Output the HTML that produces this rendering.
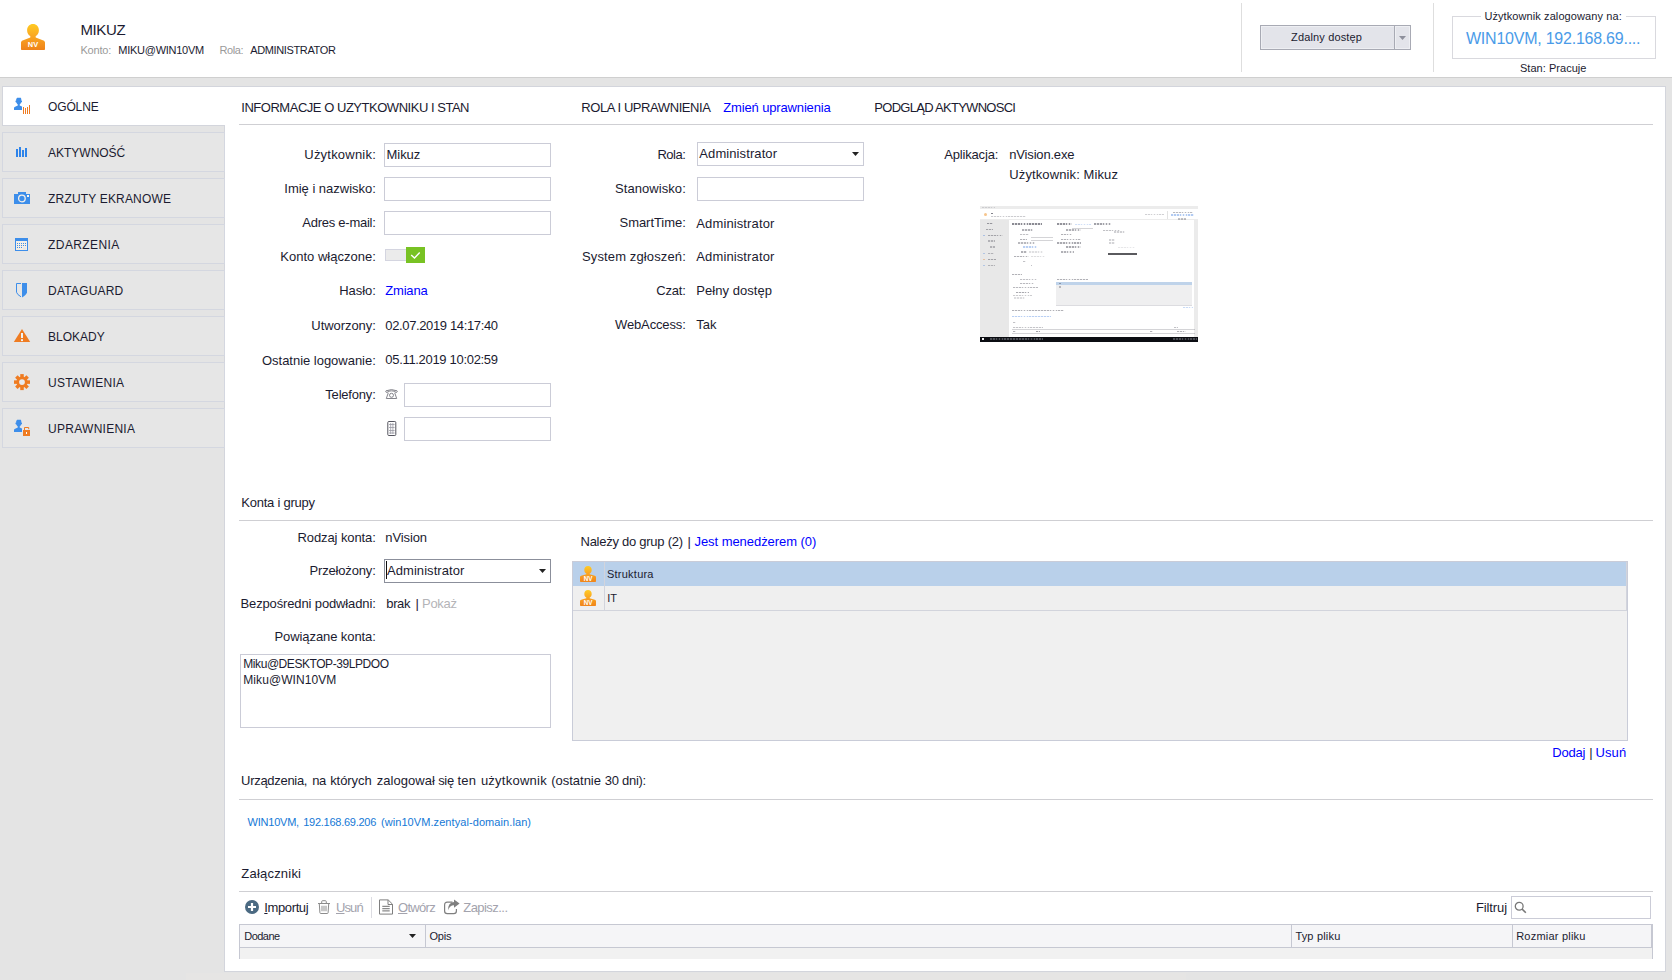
<!DOCTYPE html>
<html lang="pl"><head><meta charset="utf-8"><title>MIKUZ</title>
<style>
html,body{margin:0;padding:0;}
body{width:1672px;height:980px;overflow:hidden;background:#e4e4e4;position:relative;font-family:"Liberation Sans",sans-serif;}
.t{position:absolute;white-space:nowrap;}
.in{box-sizing:border-box;background:#fff;border:1px solid #cbccd7;}
.hl{position:absolute;height:1px;background:#cfcfd3;}
svg{position:absolute;overflow:visible;}
u{text-decoration:underline;}
</style></head><body>
<div style="position:absolute;left:0px;top:0px;width:1672px;height:77px;background:#fff;border-bottom:1px solid #cfcfcf;"></div>
<div style="position:absolute;left:1241px;top:3px;width:1px;height:69px;background:#dedede;"></div>
<div style="position:absolute;left:1433px;top:3px;width:1px;height:69px;background:#dedede;"></div>
<div style="position:absolute;left:224px;top:86px;width:1442px;height:886px;background:#fff;box-sizing:border-box;border:1px solid #d3d5dc;"></div>
<div style="position:absolute;left:2px;top:86px;width:223px;height:40px;background:#fff;box-sizing:border-box;border:1px solid #d3d5dc;border-right:none;"></div>
<span class="t" style="left:48.10px;top:100px;font-size:12px;line-height:14px;color:#1b1b30;letter-spacing:-0.158px;">OGÓLNE</span>
<div style="position:absolute;left:2px;top:132px;width:223px;height:40px;box-sizing:border-box;border:1px solid #d4d7e0;background:#e6e6e6;"></div>
<span class="t" style="left:48.10px;top:146px;font-size:12px;line-height:14px;color:#1b1b30;letter-spacing:-0.027px;">AKTYWNOŚĆ</span>
<div style="position:absolute;left:2px;top:178px;width:223px;height:40px;box-sizing:border-box;border:1px solid #d4d7e0;background:#e6e6e6;"></div>
<span class="t" style="left:48.10px;top:192px;font-size:12px;line-height:14px;color:#1b1b30;letter-spacing:0.169px;">ZRZUTY EKRANOWE</span>
<div style="position:absolute;left:2px;top:224px;width:223px;height:40px;box-sizing:border-box;border:1px solid #d4d7e0;background:#e6e6e6;"></div>
<span class="t" style="left:48.10px;top:238px;font-size:12px;line-height:14px;color:#1b1b30;letter-spacing:0.399px;">ZDARZENIA</span>
<div style="position:absolute;left:2px;top:270px;width:223px;height:40px;box-sizing:border-box;border:1px solid #d4d7e0;background:#e6e6e6;"></div>
<span class="t" style="left:48.10px;top:284px;font-size:12px;line-height:14px;color:#1b1b30;letter-spacing:0.204px;">DATAGUARD</span>
<div style="position:absolute;left:2px;top:316px;width:223px;height:40px;box-sizing:border-box;border:1px solid #d4d7e0;background:#e6e6e6;"></div>
<span class="t" style="left:48.10px;top:330px;font-size:12px;line-height:14px;color:#1b1b30;letter-spacing:-0.017px;">BLOKADY</span>
<div style="position:absolute;left:2px;top:362px;width:223px;height:40px;box-sizing:border-box;border:1px solid #d4d7e0;background:#e6e6e6;"></div>
<span class="t" style="left:48.10px;top:376px;font-size:12px;line-height:14px;color:#1b1b30;letter-spacing:0.287px;">USTAWIENIA</span>
<div style="position:absolute;left:2px;top:408px;width:223px;height:40px;box-sizing:border-box;border:1px solid #d4d7e0;background:#e6e6e6;"></div>
<span class="t" style="left:48.10px;top:422px;font-size:12px;line-height:14px;color:#1b1b30;letter-spacing:0.264px;">UPRAWNIENIA</span>
<span class="t" style="left:80.40px;top:21px;font-size:15px;line-height:17px;color:#1b1b30;letter-spacing:-0.374px;">MIKUZ</span>
<span class="t" style="left:80.40px;top:44px;font-size:11px;line-height:12px;color:#9a9a9a;letter-spacing:-0.164px;">Konto:</span>
<span class="t" style="left:118.30px;top:44px;font-size:11px;line-height:12px;color:#1b1b30;letter-spacing:-0.266px;">MIKU@WIN10VM</span>
<span class="t" style="left:219.40px;top:44px;font-size:11px;line-height:12px;color:#9a9a9a;letter-spacing:-0.398px;">Rola:</span>
<span class="t" style="left:250.20px;top:44px;font-size:11px;line-height:12px;color:#1b1b30;letter-spacing:-0.364px;">ADMINISTRATOR</span>
<div style="position:absolute;left:1260px;top:25px;width:151px;height:25px;box-sizing:border-box;border:1px solid #a8aab4;background:#e3e4ea;box-shadow:inset 0 0 0 1px #eeeff3;"></div>
<div style="position:absolute;left:1394px;top:26px;width:1px;height:23px;background:#a8aab4;"></div>
<div style="position:absolute;left:1395px;top:26px;width:1px;height:23px;background:#eeeff3;"></div>
<svg style="left:1399px;top:36px" width="7" height="4" viewBox="0 0 7 4"><path d="M0 0h7L3.5 4z" fill="#8e909c"/></svg>
<span class="t" style="left:1291.00px;top:31px;font-size:11px;line-height:12px;color:#1b1b30;letter-spacing:0.156px;">Zdalny dostęp</span>
<div style="position:absolute;left:1452px;top:16px;width:204px;height:43px;box-sizing:border-box;border:1px solid #d9d9de;"></div>
<div style="position:absolute;left:1481px;top:10px;width:145px;height:12px;background:#fff;"></div>
<span class="t" style="left:1484.40px;top:10px;font-size:11px;line-height:12px;color:#1b1b30;letter-spacing:0.091px;">Użytkownik zalogowany na:</span>
<span class="t" style="left:1466.00px;top:30px;font-size:16px;line-height:17px;color:#4a9be8;letter-spacing:-0.233px;">WIN10VM, 192.168.69....</span>
<span class="t" style="left:1520.00px;top:62px;font-size:11px;line-height:12px;color:#1b1b30;letter-spacing:0.036px;">Stan: Pracuje</span>
<span class="t" style="left:241.30px;top:100px;font-size:13px;line-height:15px;color:#1b1b30;letter-spacing:-0.474px;">INFORMACJE O UZYTKOWNIKU I STAN</span>
<span class="t" style="left:581.30px;top:100px;font-size:13px;line-height:15px;color:#1b1b30;letter-spacing:-0.419px;">ROLA I UPRAWNIENIA</span>
<span class="t" style="left:723.30px;top:100px;font-size:13px;line-height:15px;color:#0000ff;letter-spacing:-0.149px;">Zmień uprawnienia</span>
<span class="t" style="left:874.30px;top:100px;font-size:13px;line-height:15px;color:#1b1b30;letter-spacing:-0.717px;">PODGLĄD AKTYWNOSCI</span>
<div class="hl" style="left:239px;top:124px;width:1414px"></div>
<span class="t" style="left:304.30px;top:147px;font-size:13px;line-height:15px;color:#1b1b30;letter-spacing:0.212px;">Użytkownik:</span>
<span class="t" style="left:284.30px;top:181px;font-size:13px;line-height:15px;color:#1b1b30;letter-spacing:-0.016px;">Imię i nazwisko:</span>
<span class="t" style="left:302.30px;top:215px;font-size:13px;line-height:15px;color:#1b1b30;letter-spacing:-0.255px;">Adres e-mail:</span>
<span class="t" style="left:280.30px;top:249px;font-size:13px;line-height:15px;color:#1b1b30;letter-spacing:0.008px;">Konto włączone:</span>
<span class="t" style="left:339.30px;top:283px;font-size:13px;line-height:15px;color:#1b1b30;letter-spacing:-0.077px;">Hasło:</span>
<span class="t" style="left:311.30px;top:318px;font-size:13px;line-height:15px;color:#1b1b30;letter-spacing:-0.057px;">Utworzony:</span>
<span class="t" style="left:262.00px;top:353px;font-size:13px;line-height:15px;color:#1b1b30;letter-spacing:-0.021px;">Ostatnie logowanie:</span>
<span class="t" style="left:325.30px;top:387px;font-size:13px;line-height:15px;color:#1b1b30;letter-spacing:-0.197px;">Telefony:</span>
<div class="in" style="position:absolute;left:384px;top:143px;width:167px;height:24px;"></div>
<div class="in" style="position:absolute;left:384px;top:177px;width:167px;height:24px;"></div>
<div class="in" style="position:absolute;left:384px;top:211px;width:167px;height:24px;"></div>
<span class="t" style="left:386.50px;top:147px;font-size:13px;line-height:15px;color:#1b1b30;letter-spacing:-0.036px;">Mikuz</span>
<div style="position:absolute;left:385px;top:249px;width:22px;height:12px;box-sizing:border-box;background:#ebebeb;border:1px solid #d4d5e0;"></div>
<div style="position:absolute;left:406px;top:247px;width:19px;height:16px;background:#78c223;"></div>
<svg style="left:410px;top:251px" width="11" height="8" viewBox="0 0 11 8"><path d="M1.200 4L4.500 7.100 9.700 1.500" fill="none" stroke="#fff" stroke-width="1.400"/></svg>
<span class="t" style="left:385.30px;top:283px;font-size:13px;line-height:15px;color:#0000ff;letter-spacing:-0.197px;">Zmiana</span>
<span class="t" style="left:385.30px;top:318px;font-size:13px;line-height:15px;color:#1b1b30;letter-spacing:-0.367px;">02.07.2019 14:17:40</span>
<span class="t" style="left:385.30px;top:352px;font-size:13px;line-height:15px;color:#1b1b30;letter-spacing:-0.312px;">05.11.2019 10:02:59</span>
<div class="in" style="position:absolute;left:404px;top:383px;width:147px;height:24px;"></div>
<div class="in" style="position:absolute;left:404px;top:417px;width:147px;height:24px;"></div>
<span class="t" style="left:657.50px;top:147px;font-size:13px;line-height:15px;color:#1b1b30;letter-spacing:-0.521px;">Rola:</span>
<span class="t" style="left:615.00px;top:181px;font-size:13px;line-height:15px;color:#1b1b30;letter-spacing:0.068px;">Stanowisko:</span>
<span class="t" style="left:619.50px;top:215px;font-size:13px;line-height:15px;color:#1b1b30;letter-spacing:-0.044px;">SmartTime:</span>
<span class="t" style="left:582.00px;top:249px;font-size:13px;line-height:15px;color:#1b1b30;letter-spacing:0.129px;">System zgłoszeń:</span>
<span class="t" style="left:656.30px;top:283px;font-size:13px;line-height:15px;color:#1b1b30;letter-spacing:-0.219px;">Czat:</span>
<span class="t" style="left:615.00px;top:317px;font-size:13px;line-height:15px;color:#1b1b30;letter-spacing:-0.134px;">WebAccess:</span>
<div class="in" style="position:absolute;left:697px;top:142px;width:167px;height:24px;"></div>
<span class="t" style="left:699.30px;top:146px;font-size:13px;line-height:15px;color:#1b1b30;letter-spacing:0.095px;">Administrator</span>
<svg style="left:852px;top:152px" width="7" height="4" viewBox="0 0 7 4"><path d="M0 0h7L3.5 4z" fill="#222"/></svg>
<div class="in" style="position:absolute;left:697px;top:177px;width:167px;height:24px;"></div>
<span class="t" style="left:696.30px;top:216px;font-size:13px;line-height:15px;color:#1b1b30;letter-spacing:0.120px;">Administrator</span>
<span class="t" style="left:696.30px;top:249px;font-size:13px;line-height:15px;color:#1b1b30;letter-spacing:0.120px;">Administrator</span>
<span class="t" style="left:696.30px;top:283px;font-size:13px;line-height:15px;color:#1b1b30;letter-spacing:0.046px;">Pełny dostęp</span>
<span class="t" style="left:696.30px;top:317px;font-size:13px;line-height:15px;color:#1b1b30;letter-spacing:-0.058px;">Tak</span>
<span class="t" style="left:944.30px;top:147px;font-size:13px;line-height:15px;color:#1b1b30;letter-spacing:-0.181px;">Aplikacja:</span>
<span class="t" style="left:1009.30px;top:147px;font-size:13px;line-height:15px;color:#1b1b30;letter-spacing:-0.181px;">nVision.exe</span>
<span class="t" style="left:1009.30px;top:167px;font-size:13px;line-height:15px;color:#1b1b30;letter-spacing:0.110px;">Użytkownik: Mikuz</span>
<span class="t" style="left:241.30px;top:495px;font-size:13px;line-height:15px;color:#1b1b30;letter-spacing:-0.244px;">Konta i grupy</span>
<div class="hl" style="left:239px;top:520px;width:1414px"></div>
<span class="t" style="left:297.50px;top:530px;font-size:13px;line-height:15px;color:#1b1b30;letter-spacing:-0.100px;">Rodzaj konta:</span>
<span class="t" style="left:385.30px;top:530px;font-size:13px;line-height:15px;color:#1b1b30;letter-spacing:-0.113px;">nVision</span>
<span class="t" style="left:309.50px;top:563px;font-size:13px;line-height:15px;color:#1b1b30;letter-spacing:-0.164px;">Przełożony:</span>
<div style="position:absolute;left:384px;top:559px;width:167px;height:24px;box-sizing:border-box;background:#fff;border:1px solid #8b8f9b;"></div>
<div style="position:absolute;left:386px;top:561px;width:1px;height:18px;background:#111;"></div>
<span class="t" style="left:387.00px;top:563px;font-size:13px;line-height:15px;color:#1b1b30;letter-spacing:0.062px;">Administrator</span>
<svg style="left:539px;top:569px" width="7" height="4" viewBox="0 0 7 4"><path d="M0 0h7L3.5 4z" fill="#222"/></svg>
<span class="t" style="left:240.50px;top:596px;font-size:13px;line-height:15px;color:#1b1b30;letter-spacing:-0.132px;">Bezpośredni podwładni:</span>
<span class="t" style="left:386.30px;top:596px;font-size:13px;line-height:15px;color:#1b1b30;letter-spacing:-0.394px;">brak</span>
<span class="t" style="left:415.50px;top:596px;font-size:13px;line-height:15px;color:#1b1b30;">|</span>
<span class="t" style="left:422.00px;top:596px;font-size:13px;line-height:15px;color:#b4b4b8;letter-spacing:-0.283px;">Pokaż</span>
<span class="t" style="left:274.50px;top:629px;font-size:13px;line-height:15px;color:#1b1b30;letter-spacing:-0.088px;">Powiązane konta:</span>
<div class="in" style="position:absolute;left:240px;top:654px;width:311px;height:74px;"></div>
<span class="t" style="left:243.30px;top:657px;font-size:12px;line-height:14px;color:#1b1b30;letter-spacing:-0.438px;">Miku@DESKTOP-39LPDOO</span>
<span class="t" style="left:243.30px;top:673px;font-size:12px;line-height:14px;color:#1b1b30;letter-spacing:0.073px;">Miku@WIN10VM</span>
<span class="t" style="left:580.50px;top:534px;font-size:13px;line-height:15px;color:#1b1b30;letter-spacing:-0.261px;">Należy do grup (2)</span>
<span class="t" style="left:687.50px;top:534px;font-size:13px;line-height:15px;color:#1b1b30;">|</span>
<span class="t" style="left:694.50px;top:534px;font-size:13px;line-height:15px;color:#0000ff;letter-spacing:-0.056px;">Jest menedżerem (0)</span>
<div style="position:absolute;left:572px;top:561px;width:1056px;height:180px;box-sizing:border-box;background:#f0f0f0;border:1px solid #c9ccd8;"></div>
<div style="position:absolute;left:573px;top:562px;width:1054px;height:24px;background:#b9d0ea;"></div>
<div style="position:absolute;left:573px;top:586px;width:1054px;height:25px;background:#efefef;border-bottom:1px solid #d2d4dc;box-sizing:border-box;"></div>
<div style="position:absolute;left:604px;top:562px;width:1px;height:49px;background:#d2d4dc;"></div>
<div style="position:absolute;left:1626px;top:562px;width:1px;height:49px;background:#d2d4dc;"></div>
<span class="t" style="left:607.00px;top:568px;font-size:11px;line-height:12px;color:#1b1b30;letter-spacing:0.233px;">Struktura</span>
<span class="t" style="left:607.30px;top:592px;font-size:11px;line-height:12px;color:#1b1b30;">IT</span>
<span class="t" style="left:1552.30px;top:745px;font-size:13px;line-height:15px;color:#0000ff;letter-spacing:-0.250px;">Dodaj</span>
<span class="t" style="left:1589.30px;top:745px;font-size:13px;line-height:15px;color:#1b1b30;">|</span>
<span class="t" style="left:1595.50px;top:745px;font-size:13px;line-height:15px;color:#0000ff;letter-spacing:0.105px;">Usuń</span>
<span class="t" style="left:241.11px;top:773px;font-size:13px;line-height:15px;color:#1b1b30;letter-spacing:-0.300px;">Urządzenia, </span>
<span class="t" style="left:312.15px;top:773px;font-size:13px;line-height:15px;color:#1b1b30;letter-spacing:-0.300px;">na </span>
<span class="t" style="left:330.20px;top:773px;font-size:13px;line-height:15px;color:#1b1b30;letter-spacing:-0.080px;">których </span>
<span class="t" style="left:376.70px;top:773px;font-size:13px;line-height:15px;color:#1b1b30;letter-spacing:0.060px;">zalogował </span>
<span class="t" style="left:438.13px;top:773px;font-size:13px;line-height:15px;color:#1b1b30;letter-spacing:-0.300px;">się </span>
<span class="t" style="left:457.60px;top:773px;font-size:13px;line-height:15px;color:#1b1b30;letter-spacing:0.116px;">ten </span>
<span class="t" style="left:480.90px;top:773px;font-size:13px;line-height:15px;color:#1b1b30;letter-spacing:0.242px;">użytkownik </span>
<span class="t" style="left:551.20px;top:773px;font-size:13px;line-height:15px;color:#1b1b30;letter-spacing:-0.011px;">(ostatnie </span>
<span class="t" style="left:604.73px;top:773px;font-size:13px;line-height:15px;color:#1b1b30;letter-spacing:-0.300px;">30 </span>
<span class="t" style="left:622.09px;top:773px;font-size:13px;line-height:15px;color:#1b1b30;letter-spacing:-0.300px;">dni):</span>
<div class="hl" style="left:239px;top:799px;width:1414px"></div>
<span class="t" style="left:247.50px;top:816px;font-size:11px;line-height:12px;color:#1478d6;letter-spacing:-0.214px;">WIN10VM, </span>
<span class="t" style="left:303.20px;top:816px;font-size:11px;line-height:12px;color:#1478d6;letter-spacing:-0.254px;">192.168.69.206 </span>
<span class="t" style="left:380.90px;top:816px;font-size:11px;line-height:12px;color:#1478d6;letter-spacing:0.080px;">(win10VM.zentyal-domain.lan)</span>
<span class="t" style="left:241.30px;top:866px;font-size:13px;line-height:15px;color:#1b1b30;letter-spacing:0.210px;">Załączniki</span>
<div class="hl" style="left:239px;top:891px;width:1414px"></div>
<span class="t" style="left:264.30px;top:900px;font-size:13px;line-height:15px;color:#1b1b30;letter-spacing:-0.378px;"><u>I</u>mportuj</span>
<span class="t" style="left:336.00px;top:900px;font-size:13px;line-height:15px;color:#a3a3ad;letter-spacing:-0.895px;"><u>U</u>suń</span>
<div style="position:absolute;left:371px;top:897px;width:1px;height:21px;background:#dcdce2;"></div>
<span class="t" style="left:398.00px;top:900px;font-size:13px;line-height:15px;color:#a3a3ad;letter-spacing:-0.697px;"><u>O</u>twórz</span>
<span class="t" style="left:463.30px;top:900px;font-size:13px;line-height:15px;color:#a3a3ad;letter-spacing:-0.553px;">Zapisz...</span>
<span class="t" style="left:1476.00px;top:900px;font-size:13px;line-height:15px;color:#1b1b30;letter-spacing:-0.125px;">Filtruj</span>
<div class="in" style="position:absolute;left:1511px;top:896px;width:140px;height:23px;"></div>
<div style="position:absolute;left:239px;top:924px;width:1414px;height:24px;box-sizing:border-box;background:#f5f5f7;border:1px solid #c6c8d2;"></div>
<div style="position:absolute;left:239px;top:948px;width:1414px;height:11px;background:#f1f1f1;border-left:1px solid #c6c8d2;border-right:1px solid #c6c8d2;box-sizing:border-box;"></div>
<div style="position:absolute;left:425px;top:925px;width:1px;height:22px;background:#c6c8d2;"></div>
<div style="position:absolute;left:1291px;top:925px;width:1px;height:22px;background:#c6c8d2;"></div>
<div style="position:absolute;left:1512px;top:925px;width:1px;height:22px;background:#c6c8d2;"></div>
<div style="position:absolute;left:1651px;top:925px;width:1px;height:22px;background:#c6c8d2;"></div>
<span class="t" style="left:244.30px;top:930px;font-size:11px;line-height:12px;color:#1b1b30;letter-spacing:-0.535px;">Dodane</span>
<span class="t" style="left:429.40px;top:930px;font-size:11px;line-height:12px;color:#1b1b30;letter-spacing:-0.210px;">Opis</span>
<span class="t" style="left:1295.40px;top:930px;font-size:11px;line-height:12px;color:#1b1b30;letter-spacing:0.182px;">Typ pliku</span>
<span class="t" style="left:1516.20px;top:930px;font-size:11px;line-height:12px;color:#1b1b30;letter-spacing:0.214px;">Rozmiar pliku</span>
<svg style="left:409px;top:934px" width="7" height="4" viewBox="0 0 7 4"><path d="M0 0h7L3.5 4z" fill="#222"/></svg>
<svg style="left:21px;top:24px" width="24" height="26" viewBox="0 0 24 26"><defs><linearGradient id="ag1" x1="0" y1="0" x2="0" y2="1"><stop offset="0" stop-color="#ffca22"/><stop offset="0.45" stop-color="#faa823"/><stop offset="1" stop-color="#ef8219"/></linearGradient></defs><path fill="url(#ag1)" d="M12 0C8.6 0 6.1 2.7 6.1 6.2c0 2.7 1.3 4.9 3.2 5.9V13.4L1.6 16.6C0.6 17 0 17.8 0 18.8V25c0 .6.4 1 1 1H23c.6 0 1-.4 1-1V18.8c0-1-.6-1.8-1.6-2.2L14.7 13.4V12.1c1.900-1 3.200-3.200 3.200-5.900C17.900 2.700 15.400 0 12 0z"/><text x="12" y="23" text-anchor="middle" font-family="Liberation Sans, sans-serif" font-weight="bold" font-size="7.4" fill="#fff">NV</text></svg>
<svg style="left:580px;top:566px" width="16" height="16" viewBox="0 0 16 16"><defs><linearGradient id="ag2" x1="0" y1="0" x2="0" y2="1"><stop offset="0" stop-color="#ffcb24"/><stop offset="0.5" stop-color="#f9a322"/><stop offset="1" stop-color="#f0851b"/></linearGradient></defs><path fill="url(#ag2)" d="M8 0C5.800 0 4.300 1.700 4.300 3.900c0 1.700.8 3 2 3.700v.7L1.200 9.800C.5 10 0 10.600 0 11.300V15.300c0 .4.300.7.700.7H15.300c.4 0 .7-.3.700-.7V11.300c0-.7-.5-1.300-1.200-1.500L9.700 8.300v-.7c1.200-.7 2-2 2-3.700C11.700 1.700 10.200 0 8 0z"/><text x="8" y="14.800" text-anchor="middle" font-family="Liberation Sans, sans-serif" font-weight="bold" font-size="6.300" fill="#fff">NV</text></svg>
<svg style="left:580px;top:590px" width="16" height="16" viewBox="0 0 16 16"><defs><linearGradient id="ag3" x1="0" y1="0" x2="0" y2="1"><stop offset="0" stop-color="#ffcb24"/><stop offset="0.5" stop-color="#f9a322"/><stop offset="1" stop-color="#f0851b"/></linearGradient></defs><path fill="url(#ag3)" d="M8 0C5.800 0 4.300 1.700 4.300 3.900c0 1.700.8 3 2 3.700v.7L1.200 9.800C.5 10 0 10.600 0 11.300V15.300c0 .4.300.7.700.7H15.300c.4 0 .7-.3.700-.7V11.300c0-.7-.5-1.300-1.200-1.500L9.700 8.300v-.7c1.200-.7 2-2 2-3.700C11.700 1.700 10.200 0 8 0z"/><text x="8" y="14.800" text-anchor="middle" font-family="Liberation Sans, sans-serif" font-weight="bold" font-size="6.300" fill="#fff">NV</text></svg>
<svg style="left:14px;top:97px" width="8" height="13" viewBox="0 0 8 13"><path fill="#3d8eea" d="M3.2 0.8h3.6l.5 1.2v1.4l.7.4v1.3l-.8.5-.9 1.4-.6.4v1l2.300 1V13H0V10.800L.6 9.900 3.800 8.400v-1l-.6-.4-.9-1.400-.8-.5V3.800l.7-.4V2z"/></svg>
<div style="position:absolute;left:23px;top:107px;width:1px;height:7px;background:#ef7c22;"></div>
<div style="position:absolute;left:25px;top:108px;width:1px;height:6px;background:#ef7c22;"></div>
<div style="position:absolute;left:27px;top:107px;width:1px;height:7px;background:#ef7c22;"></div>
<div style="position:absolute;left:29px;top:105px;width:1px;height:9px;background:#ef7c22;"></div>
<div style="position:absolute;left:16px;top:149px;width:2px;height:8px;background:#2e84ea;"></div>
<div style="position:absolute;left:19px;top:147px;width:2px;height:10px;background:#2e84ea;"></div>
<div style="position:absolute;left:22px;top:150px;width:2px;height:7px;background:#2e84ea;"></div>
<div style="position:absolute;left:25px;top:148px;width:2px;height:9px;background:#2e84ea;"></div>
<svg style="left:14px;top:192px" width="16" height="12" viewBox="0 0 16 12"><path fill="#3d8eea" d="M4 0h8v2h4v10H0V2h4z"/><circle cx="7.9" cy="6.5" r="3.3" fill="none" stroke="#f6f1ea" stroke-width="1.3"/><rect x="13" y="3" width="2" height="2" fill="#fbf8f2"/></svg>
<svg style="left:15px;top:238px" width="13" height="13" viewBox="0 0 13 13"><rect width="13" height="13" fill="#3d8eea"/><rect x="1" y="3" width="11" height="9" fill="#f5efe6"/><rect x="8" y="9.500" width="3" height="2" fill="#e6e6e6"/><rect x="2" y="5" width="1" height="1" fill="#3d8eea"/><rect x="4" y="5" width="1" height="1" fill="#3d8eea"/><rect x="6" y="5" width="1" height="1" fill="#3d8eea"/><rect x="8" y="5" width="1" height="1" fill="#3d8eea"/><rect x="10" y="5" width="1" height="1" fill="#3d8eea"/><rect x="2" y="7" width="1" height="1" fill="#3d8eea"/><rect x="4" y="7" width="1" height="1" fill="#3d8eea"/><rect x="6" y="7" width="1" height="1" fill="#3d8eea"/><rect x="8" y="7" width="1" height="1" fill="#3d8eea"/><rect x="10" y="7" width="1" height="1" fill="#3d8eea"/><rect x="2" y="9" width="1" height="1" fill="#3d8eea"/><rect x="4" y="9" width="1" height="1" fill="#3d8eea"/><rect x="6" y="9" width="1" height="1" fill="#3d8eea"/></svg>
<svg style="left:16px;top:283px" width="11" height="15" viewBox="0 0 11 15"><path d="M5 .5H.5V9.200Q1 11.500 5 13.800" fill="none" stroke="#3d8eea" stroke-width="1"/><path d="M6 0h5v9.300Q10.300 12.300 6 14.600z" fill="#3d8eea"/></svg>
<svg style="left:14px;top:329px" width="16" height="13" viewBox="0 0 16 13"><path d="M8 0L16.200 13H-.2z" fill="#ef7c22"/><rect x="7" y="4" width="2" height="5" fill="#eef4f8"/><rect x="7" y="10.200" width="2" height="1.900" fill="#eef4f8"/></svg>
<svg style="left:14px;top:374px" width="16" height="16" viewBox="0 0 16 16"><g transform="translate(8 8.100)" fill="#ef7c22"><rect x="-1.750" y="-8" width="3.500" height="4" transform="rotate(0)"/><rect x="-1.750" y="-8" width="3.500" height="4" transform="rotate(45)"/><rect x="-1.750" y="-8" width="3.500" height="4" transform="rotate(90)"/><rect x="-1.750" y="-8" width="3.500" height="4" transform="rotate(135)"/><rect x="-1.750" y="-8" width="3.500" height="4" transform="rotate(180)"/><rect x="-1.750" y="-8" width="3.500" height="4" transform="rotate(225)"/><rect x="-1.750" y="-8" width="3.500" height="4" transform="rotate(270)"/><rect x="-1.750" y="-8" width="3.500" height="4" transform="rotate(315)"/><circle r="5.600"/></g><circle cx="8" cy="8.100" r="2.900" fill="#e9eaec"/></svg>
<svg style="left:14px;top:419px" width="8" height="13" viewBox="0 0 8 13"><path fill="#3d8eea" d="M3.2 0.8h3.6l.5 1.2v1.4l.7.4v1.3l-.8.5-.9 1.4-.6.4v1l2.300 1V13H0V10.800L.6 9.900 3.800 8.400v-1l-.6-.4-.9-1.400-.8-.5V3.800l.7-.4V2z"/></svg>
<svg style="left:23px;top:427px" width="7" height="9" viewBox="0 0 7 9"><path d="M1.500 3V.5h4.200v1.700" fill="none" stroke="#ef7c22" stroke-width="1"/><rect y="3" width="7" height="6" fill="#ef7c22"/><rect x="3" y="5" width="1" height="2" fill="#fff"/></svg>
<svg style="left:385px;top:389px" width="13" height="10" viewBox="0 0 13 10"><g fill="none" stroke="#77777f" stroke-width="0.9"><path d="M1.500 3.500Q.2 3 1 1.800 6.500-.6 12 1.800q.8 1.200-.5 1.700-1.600.2-1.500-1.200-3.500-.9-7 0Q3.100 3.700 1.500 3.500z"/><path d="M3.300 3.800L1.300 9.500h10.400L9.700 3.800"/><circle cx="6.500" cy="6.300" r="2"/></g></svg>
<svg style="left:387px;top:421px" width="10" height="15" viewBox="0 0 10 15"><g fill="none" stroke="#55555f" stroke-width="1"><rect x=".8" y=".5" width="8" height="14" rx="1"/></g><g stroke="#9a9aa4" stroke-width=".8"><path d="M2 3.500h5.600M2 6.500h5.600M2 9.500h5.600M2 12h5.600M3.700 2v11M5.900 2v11"/></g></svg>
<svg style="left:245px;top:900px" width="14" height="14" viewBox="0 0 14 14"><circle cx="7" cy="7" r="7" fill="#4b6a82"/><path d="M3 7h8M7 3v8" stroke="#fff" stroke-width="2.200"/></svg>
<svg style="left:318px;top:900px" width="12" height="14" viewBox="0 0 12 14"><g fill="none" stroke="#8c8c8c" stroke-width="1"><path d="M0 3.500h12M3.700 3.300V1.600Q3.700.7 4.700.7h2.600q1 0 1 .9v1.700"/><path d="M1.300 3.800l.6 9q.1.700.8.700h6.600q.7 0 .8-.7l.6-9"/></g><path d="M4 5.800v5.400M6 5.800v5.400M8 5.800v5.400" stroke="#9a9a9a" stroke-width="1.100"/></svg>
<svg style="left:379px;top:899px" width="14" height="16" viewBox="0 0 14 16"><path d="M.5.900h8.700l4.300 4.300v9.900H.5z" fill="#fff" stroke="#7f7f7f" stroke-width="1"/><path d="M9 1v4.500h4.500" fill="none" stroke="#7f7f7f" stroke-width="1"/><path d="M3.300 7.300h7.400M3.300 9.600h7.400M3.300 11.900h7.400" stroke="#8a8a8a" stroke-width="1.200"/></svg>
<svg style="left:444px;top:899px" width="16" height="16" viewBox="0 0 16 16"><path d="M8.500 3.200H3.300Q.6 3.200.6 5.900v6q0 2.700 2.700 2.700h6.400q2.700 0 2.700-2.700v-1.800" fill="none" stroke="#7f7f7f" stroke-width="1.200"/><path d="M10 .5L15.600 4.600 10 8.800V6.300Q5.600 6.300 4.300 11.200 3.500 3.700 10 3z" fill="#7f7f7f"/></svg>
<svg style="left:1514px;top:901px" width="13" height="13" viewBox="0 0 13 13"><circle cx="5.200" cy="5.200" r="3.900" fill="none" stroke="#777" stroke-width="1.300"/><path d="M8 8l3.800 3.800" stroke="#777" stroke-width="1.600"/></svg>
<div style="position:absolute;left:980px;top:206px;width:218px;height:136px;background:#fff;"></div>
<div style="position:absolute;left:980px;top:206px;width:218px;height:3.4px;background:#ececec;"></div>
<div style="position:absolute;left:979.98px;top:220.39px;width:29.46px;height:116.31px;background:#e8e8e8;"></div>
<div style="position:absolute;left:979.98px;top:219.34px;width:218.13px;height:1.06px;background:#ececec;"></div>
<div style="position:absolute;left:1194.03px;top:220.39px;width:4.08px;height:116.31px;background:#ebebeb;"></div>
<div style="position:absolute;left:979.98px;top:336.71px;width:218.13px;height:5.29px;background:#0b0d12;"></div>
<div style="position:absolute;left:1055.82px;top:282.33px;width:136.25px;height:23.41px;background:#efeff0;"></div>
<div style="position:absolute;left:1055.82px;top:282.33px;width:136.25px;height:3.17px;background:#bfd3ea;"></div>
<div style="position:absolute;left:1055.82px;top:305.44px;width:136.25px;height:0.60px;background:#dcdce0;"></div>
<div style="position:absolute;left:1107.93px;top:253.17px;width:28.70px;height:1.51px;background:#5a5a5e;"></div>
<div style="position:absolute;left:1166.54px;top:210.57px;width:0.60px;height:8.31px;background:#e2e2e2;"></div>
<div style="position:absolute;left:984.06px;top:212.84px;width:2.72px;height:3.02px;background:#f7c58c;border-radius:2px;"></div>
<div style="position:absolute;left:981.80px;top:206.60px;width:13.60px;height:1.3px;background:repeating-linear-gradient(90deg,rgba(40,40,55,0.15839999999999999) 0 1.7px,rgba(40,40,55,0.04) 1.7px 2.9px)"></div>
<div style="position:absolute;left:990.86px;top:212.64px;width:2.27px;height:1.3px;background:repeating-linear-gradient(90deg,rgba(40,40,55,0.576) 0 1.7px,rgba(40,40,55,0.14) 1.7px 2.9px)"></div>
<div style="position:absolute;left:990.86px;top:215.66px;width:35.50px;height:1.3px;background:repeating-linear-gradient(90deg,rgba(40,40,55,0.2376) 0 1.7px,rgba(40,40,55,0.06) 1.7px 2.9px)"></div>
<div style="position:absolute;left:1144.94px;top:214.00px;width:18.88px;height:1.3px;background:repeating-linear-gradient(90deg,rgba(40,40,55,0.216) 0 1.7px,rgba(40,40,55,0.05) 1.7px 2.9px)"></div>
<div style="position:absolute;left:1172.89px;top:211.89px;width:20.39px;height:1.3px;background:repeating-linear-gradient(90deg,rgba(40,40,55,0.324) 0 1.7px,rgba(40,40,55,0.08) 1.7px 2.9px)"></div>
<div style="position:absolute;left:1171.37px;top:214.30px;width:22.66px;height:1.3px;background:repeating-linear-gradient(90deg,rgba(40,110,220,0.36) 0 1.7px,rgba(40,110,220,0.09) 1.7px 2.9px)"></div>
<div style="position:absolute;left:1178.17px;top:218.23px;width:8.31px;height:1.3px;background:repeating-linear-gradient(90deg,rgba(40,40,55,0.288) 0 1.7px,rgba(40,40,55,0.07) 1.7px 2.9px)"></div>
<div style="position:absolute;left:987.08px;top:222.76px;width:6.04px;height:1.3px;background:repeating-linear-gradient(90deg,rgba(40,40,55,0.432) 0 1.7px,rgba(40,40,55,0.11) 1.7px 2.9px)"></div>
<div style="position:absolute;left:986.33px;top:228.50px;width:6.80px;height:1.3px;background:repeating-linear-gradient(90deg,rgba(40,40,55,0.36) 0 1.7px,rgba(40,40,55,0.09) 1.7px 2.9px)"></div>
<div style="position:absolute;left:987.84px;top:234.85px;width:15.11px;height:1.3px;background:repeating-linear-gradient(90deg,rgba(40,40,55,0.36) 0 1.7px,rgba(40,40,55,0.09) 1.7px 2.9px)"></div>
<div style="position:absolute;left:987.84px;top:240.44px;width:6.80px;height:1.3px;background:repeating-linear-gradient(90deg,rgba(40,40,55,0.288) 0 1.7px,rgba(40,40,55,0.07) 1.7px 2.9px)"></div>
<div style="position:absolute;left:990.11px;top:246.48px;width:5.29px;height:1.3px;background:repeating-linear-gradient(90deg,rgba(40,40,55,0.288) 0 1.7px,rgba(40,40,55,0.07) 1.7px 2.9px)"></div>
<div style="position:absolute;left:987.84px;top:252.52px;width:6.04px;height:1.3px;background:repeating-linear-gradient(90deg,rgba(40,40,55,0.288) 0 1.7px,rgba(40,40,55,0.07) 1.7px 2.9px)"></div>
<div style="position:absolute;left:987.84px;top:258.56px;width:8.31px;height:1.3px;background:repeating-linear-gradient(90deg,rgba(40,40,55,0.36) 0 1.7px,rgba(40,40,55,0.09) 1.7px 2.9px)"></div>
<div style="position:absolute;left:987.84px;top:264.61px;width:6.80px;height:1.3px;background:repeating-linear-gradient(90deg,rgba(40,40,55,0.288) 0 1.7px,rgba(40,40,55,0.07) 1.7px 2.9px)"></div>
<div style="position:absolute;left:982.85px;top:234.85px;width:2.11px;height:1.3px;background:repeating-linear-gradient(90deg,rgba(40,110,220,0.324) 0 1.7px,rgba(40,110,220,0.08) 1.7px 2.9px)"></div>
<div style="position:absolute;left:982.85px;top:252.52px;width:2.11px;height:1.3px;background:repeating-linear-gradient(90deg,rgba(40,110,220,0.288) 0 1.7px,rgba(40,110,220,0.07) 1.7px 2.9px)"></div>
<div style="position:absolute;left:982.85px;top:258.56px;width:2.11px;height:1.3px;background:repeating-linear-gradient(90deg,rgba(230,120,30,0.36) 0 1.7px,rgba(230,120,30,0.09) 1.7px 2.9px)"></div>
<div style="position:absolute;left:982.85px;top:264.61px;width:2.11px;height:1.3px;background:repeating-linear-gradient(90deg,rgba(40,110,220,0.288) 0 1.7px,rgba(40,110,220,0.07) 1.7px 2.9px)"></div>
<div style="position:absolute;left:1012.01px;top:223.22px;width:30.21px;height:1.3px;background:repeating-linear-gradient(90deg,rgba(40,40,55,0.54) 0 1.7px,rgba(40,40,55,0.14) 1.7px 2.9px)"></div>
<div style="position:absolute;left:1057.33px;top:223.22px;width:14.35px;height:1.3px;background:repeating-linear-gradient(90deg,rgba(40,40,55,0.504) 0 1.7px,rgba(40,40,55,0.13) 1.7px 2.9px)"></div>
<div style="position:absolute;left:1074.70px;top:223.52px;width:16.62px;height:1.3px;background:repeating-linear-gradient(90deg,rgba(40,110,220,0.216) 0 1.7px,rgba(40,110,220,0.05) 1.7px 2.9px)"></div>
<div style="position:absolute;left:1094.34px;top:223.22px;width:16.62px;height:1.3px;background:repeating-linear-gradient(90deg,rgba(40,40,55,0.432) 0 1.7px,rgba(40,40,55,0.11) 1.7px 2.9px)"></div>
<div style="position:absolute;left:1021.83px;top:229.26px;width:11.33px;height:1.3px;background:repeating-linear-gradient(90deg,rgba(40,40,55,0.36) 0 1.7px,rgba(40,40,55,0.09) 1.7px 2.9px)"></div>
<div style="position:absolute;left:1065.63px;top:229.26px;width:15.11px;height:1.3px;background:repeating-linear-gradient(90deg,rgba(40,40,55,0.36) 0 1.7px,rgba(40,40,55,0.09) 1.7px 2.9px)"></div>
<div style="position:absolute;left:1103.40px;top:229.56px;width:16.62px;height:1.3px;background:repeating-linear-gradient(90deg,rgba(40,40,55,0.288) 0 1.7px,rgba(40,40,55,0.07) 1.7px 2.9px)"></div>
<div style="position:absolute;left:1113.97px;top:231.37px;width:10.57px;height:1.3px;background:repeating-linear-gradient(90deg,rgba(40,40,55,0.216) 0 1.7px,rgba(40,40,55,0.05) 1.7px 2.9px)"></div>
<div style="position:absolute;left:1019.56px;top:233.79px;width:9.82px;height:1.3px;background:repeating-linear-gradient(90deg,rgba(40,40,55,0.288) 0 1.7px,rgba(40,40,55,0.07) 1.7px 2.9px)"></div>
<div style="position:absolute;left:1061.10px;top:233.79px;width:10.57px;height:1.3px;background:repeating-linear-gradient(90deg,rgba(40,40,55,0.36) 0 1.7px,rgba(40,40,55,0.09) 1.7px 2.9px)"></div>
<div style="position:absolute;left:1019.56px;top:238.62px;width:7.55px;height:1.3px;background:repeating-linear-gradient(90deg,rgba(40,40,55,0.36) 0 1.7px,rgba(40,40,55,0.09) 1.7px 2.9px)"></div>
<div style="position:absolute;left:1061.10px;top:238.62px;width:19.64px;height:1.3px;background:repeating-linear-gradient(90deg,rgba(40,40,55,0.36) 0 1.7px,rgba(40,40,55,0.09) 1.7px 2.9px)"></div>
<div style="position:absolute;left:1018.05px;top:242.40px;width:17.37px;height:1.3px;background:repeating-linear-gradient(90deg,rgba(40,40,55,0.324) 0 1.7px,rgba(40,40,55,0.08) 1.7px 2.9px)"></div>
<div style="position:absolute;left:1057.33px;top:242.40px;width:23.41px;height:1.3px;background:repeating-linear-gradient(90deg,rgba(40,40,55,0.396) 0 1.7px,rgba(40,40,55,0.10) 1.7px 2.9px)"></div>
<div style="position:absolute;left:1023.34px;top:246.48px;width:13.60px;height:1.3px;background:repeating-linear-gradient(90deg,rgba(40,110,220,0.324) 0 1.7px,rgba(40,110,220,0.08) 1.7px 2.9px)"></div>
<div style="position:absolute;left:1065.63px;top:246.48px;width:15.11px;height:1.3px;background:repeating-linear-gradient(90deg,rgba(40,40,55,0.396) 0 1.7px,rgba(40,40,55,0.10) 1.7px 2.9px)"></div>
<div style="position:absolute;left:1021.07px;top:251.46px;width:6.04px;height:1.3px;background:repeating-linear-gradient(90deg,rgba(40,40,55,0.36) 0 1.7px,rgba(40,40,55,0.09) 1.7px 2.9px)"></div>
<div style="position:absolute;left:1029.38px;top:251.46px;width:13.60px;height:1.3px;background:repeating-linear-gradient(90deg,rgba(40,40,55,0.144) 0 1.7px,rgba(40,40,55,0.04) 1.7px 2.9px)"></div>
<div style="position:absolute;left:1061.10px;top:251.46px;width:12.84px;height:1.3px;background:repeating-linear-gradient(90deg,rgba(40,40,55,0.36) 0 1.7px,rgba(40,40,55,0.09) 1.7px 2.9px)"></div>
<div style="position:absolute;left:1014.27px;top:256.00px;width:14.35px;height:1.3px;background:repeating-linear-gradient(90deg,rgba(40,40,55,0.36) 0 1.7px,rgba(40,40,55,0.09) 1.7px 2.9px)"></div>
<div style="position:absolute;left:1030.89px;top:255.54px;width:14.35px;height:1.3px;background:repeating-linear-gradient(90deg,rgba(40,40,55,0.15839999999999999) 0 1.7px,rgba(40,40,55,0.04) 1.7px 2.9px)"></div>
<div style="position:absolute;left:1023.34px;top:260.53px;width:2.27px;height:1.3px;background:repeating-linear-gradient(90deg,rgba(40,40,55,0.288) 0 1.7px,rgba(40,40,55,0.07) 1.7px 2.9px)"></div>
<div style="position:absolute;left:1030.89px;top:264.61px;width:1.51px;height:1.3px;background:repeating-linear-gradient(90deg,rgba(40,40,55,0.288) 0 1.7px,rgba(40,40,55,0.07) 1.7px 2.9px)"></div>
<div style="position:absolute;left:1108.69px;top:239.38px;width:6.04px;height:1.3px;background:repeating-linear-gradient(90deg,rgba(40,40,55,0.2016) 0 1.7px,rgba(40,40,55,0.05) 1.7px 2.9px)"></div>
<div style="position:absolute;left:1108.69px;top:242.40px;width:6.04px;height:1.3px;background:repeating-linear-gradient(90deg,rgba(40,40,55,0.2016) 0 1.7px,rgba(40,40,55,0.05) 1.7px 2.9px)"></div>
<div style="position:absolute;left:1117.75px;top:246.93px;width:17.37px;height:1.3px;background:repeating-linear-gradient(90deg,rgba(40,40,55,0.108) 0 1.7px,rgba(40,40,55,0.03) 1.7px 2.9px)"></div>
<div style="position:absolute;left:1012.01px;top:274.12px;width:9.82px;height:1.3px;background:repeating-linear-gradient(90deg,rgba(40,40,55,0.36) 0 1.7px,rgba(40,40,55,0.09) 1.7px 2.9px)"></div>
<div style="position:absolute;left:1019.56px;top:278.66px;width:17.37px;height:1.3px;background:repeating-linear-gradient(90deg,rgba(40,40,55,0.288) 0 1.7px,rgba(40,40,55,0.07) 1.7px 2.9px)"></div>
<div style="position:absolute;left:1057.33px;top:279.11px;width:30.97px;height:1.3px;background:repeating-linear-gradient(90deg,rgba(40,40,55,0.36) 0 1.7px,rgba(40,40,55,0.09) 1.7px 2.9px)"></div>
<div style="position:absolute;left:1020.32px;top:282.88px;width:13.60px;height:1.3px;background:repeating-linear-gradient(90deg,rgba(40,40,55,0.324) 0 1.7px,rgba(40,40,55,0.08) 1.7px 2.9px)"></div>
<div style="position:absolute;left:1012.76px;top:286.96px;width:25.68px;height:1.3px;background:repeating-linear-gradient(90deg,rgba(40,40,55,0.324) 0 1.7px,rgba(40,40,55,0.08) 1.7px 2.9px)"></div>
<div style="position:absolute;left:1015.79px;top:291.80px;width:13.60px;height:1.3px;background:repeating-linear-gradient(90deg,rgba(40,40,55,0.396) 0 1.7px,rgba(40,40,55,0.10) 1.7px 2.9px)"></div>
<div style="position:absolute;left:1012.76px;top:294.82px;width:19.64px;height:1.3px;background:repeating-linear-gradient(90deg,rgba(40,40,55,0.2376) 0 1.7px,rgba(40,40,55,0.06) 1.7px 2.9px)"></div>
<div style="position:absolute;left:1013.52px;top:297.24px;width:11.33px;height:1.3px;background:repeating-linear-gradient(90deg,rgba(40,40,55,0.15839999999999999) 0 1.7px,rgba(40,40,55,0.04) 1.7px 2.9px)"></div>
<div style="position:absolute;left:1058.84px;top:282.88px;width:2.27px;height:1.3px;background:repeating-linear-gradient(90deg,rgba(40,40,55,0.36) 0 1.7px,rgba(40,40,55,0.09) 1.7px 2.9px)"></div>
<div style="position:absolute;left:1058.84px;top:286.36px;width:2.27px;height:1.3px;background:repeating-linear-gradient(90deg,rgba(40,40,55,0.288) 0 1.7px,rgba(40,40,55,0.07) 1.7px 2.9px)"></div>
<div style="position:absolute;left:1182.70px;top:306.60px;width:9.82px;height:1.3px;background:repeating-linear-gradient(90deg,rgba(40,110,220,0.252) 0 1.7px,rgba(40,110,220,0.06) 1.7px 2.9px)"></div>
<div style="position:absolute;left:1012.01px;top:310.08px;width:52.11px;height:1.3px;background:repeating-linear-gradient(90deg,rgba(40,40,55,0.36) 0 1.7px,rgba(40,40,55,0.09) 1.7px 2.9px)"></div>
<div style="position:absolute;left:1012.01px;top:315.66px;width:38.52px;height:1.3px;background:repeating-linear-gradient(90deg,rgba(40,110,220,0.324) 0 1.7px,rgba(40,110,220,0.08) 1.7px 2.9px)"></div>
<div style="position:absolute;left:1012.76px;top:322.01px;width:3.02px;height:1.3px;background:repeating-linear-gradient(90deg,rgba(40,40,55,0.288) 0 1.7px,rgba(40,40,55,0.07) 1.7px 2.9px)"></div>
<div style="position:absolute;left:1012.76px;top:326.54px;width:30.21px;height:1.3px;background:repeating-linear-gradient(90deg,rgba(40,40,55,0.2736) 0 1.7px,rgba(40,40,55,0.07) 1.7px 2.9px)"></div>
<div style="position:absolute;left:1174.40px;top:326.54px;width:3.78px;height:1.3px;background:repeating-linear-gradient(90deg,rgba(40,40,55,0.288) 0 1.7px,rgba(40,40,55,0.07) 1.7px 2.9px)"></div>
<div style="position:absolute;left:1012.76px;top:330.77px;width:3.02px;height:1.3px;background:repeating-linear-gradient(90deg,rgba(40,40,55,0.36) 0 1.7px,rgba(40,40,55,0.09) 1.7px 2.9px)"></div>
<div style="position:absolute;left:1036.18px;top:330.77px;width:3.78px;height:1.3px;background:repeating-linear-gradient(90deg,rgba(40,40,55,0.432) 0 1.7px,rgba(40,40,55,0.11) 1.7px 2.9px)"></div>
<div style="position:absolute;left:1150.23px;top:330.77px;width:3.02px;height:1.3px;background:repeating-linear-gradient(90deg,rgba(40,40,55,0.36) 0 1.7px,rgba(40,40,55,0.09) 1.7px 2.9px)"></div>
<div style="position:absolute;left:1177.42px;top:330.77px;width:8.31px;height:1.3px;background:repeating-linear-gradient(90deg,rgba(40,40,55,0.36) 0 1.7px,rgba(40,40,55,0.09) 1.7px 2.9px)"></div>
<div style="position:absolute;left:1071.68px;top:227.75px;width:21.15px;height:1px;background:rgba(40,40,55,0.2)"></div>
<div style="position:absolute;left:1030.89px;top:236.51px;width:21.90px;height:1px;background:rgba(40,40,55,0.2)"></div>
<div style="position:absolute;left:1030.89px;top:239.98px;width:21.90px;height:1px;background:rgba(40,40,55,0.2)"></div>
<div style="position:absolute;left:1012.01px;top:328.96px;width:182.78px;height:1px;background:rgba(40,40,55,0.2)"></div>
<div style="position:absolute;left:1012.01px;top:332.73px;width:182.78px;height:1px;background:rgba(40,40,55,0.2)"></div>
<div style="position:absolute;left:982.25px;top:338.17px;width:1.51px;height:2.2px;background:rgba(255,255,255,0.95)"></div>
<div style="position:absolute;left:990.11px;top:338.27px;width:52.87px;height:2px;background:repeating-linear-gradient(90deg,rgba(220,225,235,0.3024) 0 1.7px,rgba(220,225,235,0.08) 1.7px 2.9px)"></div>
<div style="position:absolute;left:1172.89px;top:338.37px;width:24.17px;height:1.8px;background:repeating-linear-gradient(90deg,rgba(220,225,235,0.288) 0 1.7px,rgba(220,225,235,0.07) 1.7px 2.9px)"></div>
<div style="position:absolute;left:186px;top:973px;width:1000px;height:7px;background:#e6e5e4;"></div>
</body></html>
